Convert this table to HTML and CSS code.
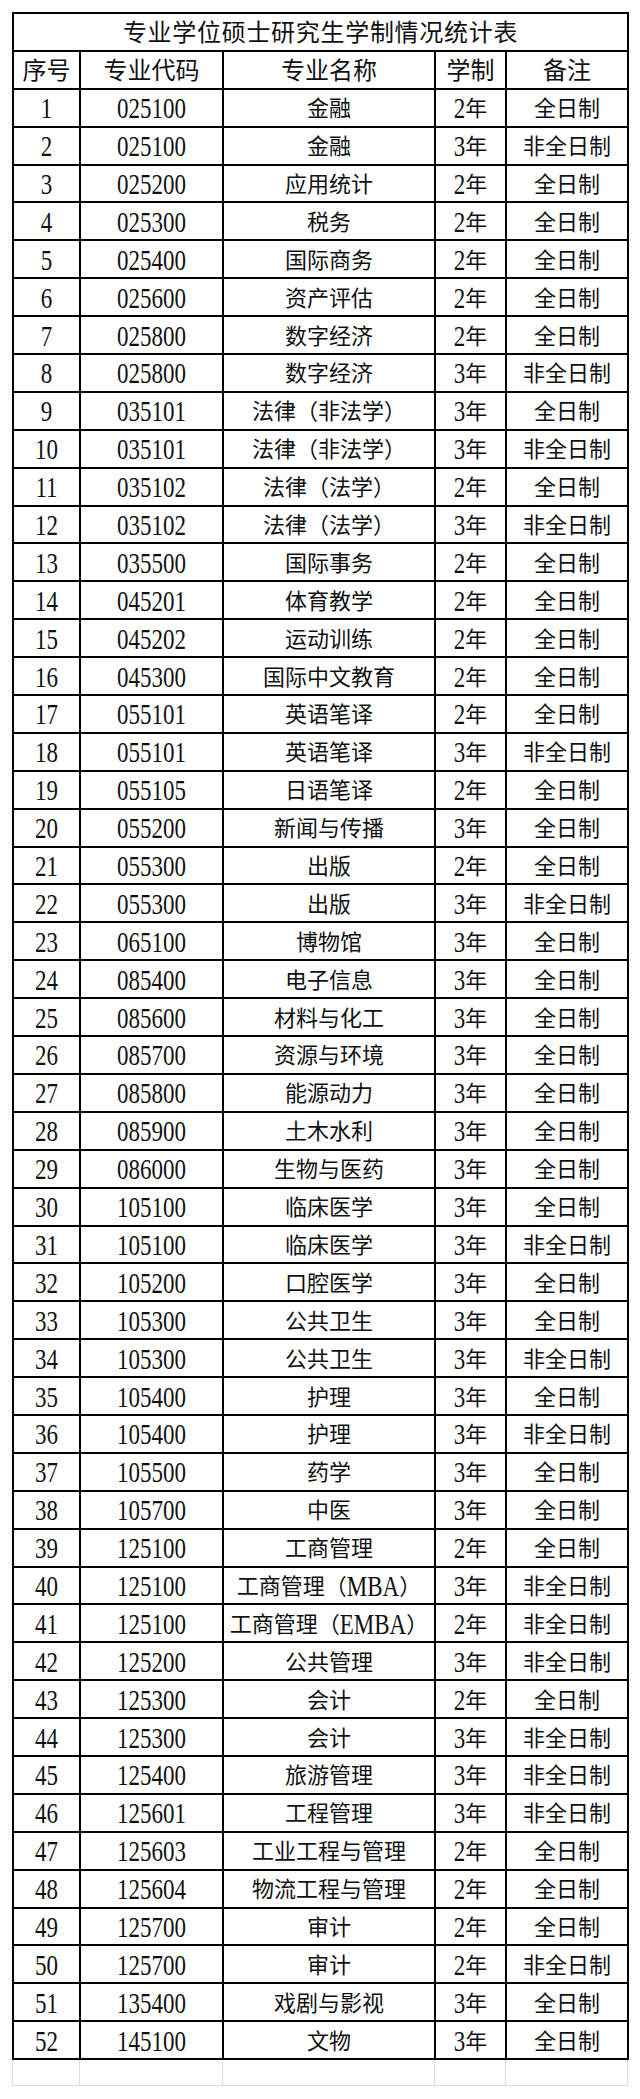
FILE: index.html
```html
<!DOCTYPE html>
<html lang="zh-CN">
<head>
<meta charset="utf-8">
<title>专业学位硕士研究生学制情况统计表</title>
<link rel="stylesheet" href="styles.css">
</head>
<body>
<div class="sheet">
<table class="stats">
<colgroup><col class="c1"><col class="c2"><col class="c3"><col class="c4"><col class="c5"></colgroup>
<thead>
<tr><th colspan="5" class="title">专业学位硕士研究生学制情况统计表</th></tr>
<tr class="head"><th>序号</th><th>专业代码</th><th>专业名称</th><th>学制</th><th>备注</th></tr>
</thead>
<tbody>
<tr><td><span class="n">1</span></td><td><span class="n">025100</span></td><td>金融</td><td><span class="n">2</span>年</td><td>全日制</td></tr>
<tr><td><span class="n">2</span></td><td><span class="n">025100</span></td><td>金融</td><td><span class="n">3</span>年</td><td>非全日制</td></tr>
<tr><td><span class="n">3</span></td><td><span class="n">025200</span></td><td>应用统计</td><td><span class="n">2</span>年</td><td>全日制</td></tr>
<tr><td><span class="n">4</span></td><td><span class="n">025300</span></td><td>税务</td><td><span class="n">2</span>年</td><td>全日制</td></tr>
<tr><td><span class="n">5</span></td><td><span class="n">025400</span></td><td>国际商务</td><td><span class="n">2</span>年</td><td>全日制</td></tr>
<tr><td><span class="n">6</span></td><td><span class="n">025600</span></td><td>资产评估</td><td><span class="n">2</span>年</td><td>全日制</td></tr>
<tr><td><span class="n">7</span></td><td><span class="n">025800</span></td><td>数字经济</td><td><span class="n">2</span>年</td><td>全日制</td></tr>
<tr><td><span class="n">8</span></td><td><span class="n">025800</span></td><td>数字经济</td><td><span class="n">3</span>年</td><td>非全日制</td></tr>
<tr><td><span class="n">9</span></td><td><span class="n">035101</span></td><td>法律（非法学）</td><td><span class="n">3</span>年</td><td>全日制</td></tr>
<tr><td><span class="n">10</span></td><td><span class="n">035101</span></td><td>法律（非法学）</td><td><span class="n">3</span>年</td><td>非全日制</td></tr>
<tr><td><span class="n">11</span></td><td><span class="n">035102</span></td><td>法律（法学）</td><td><span class="n">2</span>年</td><td>全日制</td></tr>
<tr><td><span class="n">12</span></td><td><span class="n">035102</span></td><td>法律（法学）</td><td><span class="n">3</span>年</td><td>非全日制</td></tr>
<tr><td><span class="n">13</span></td><td><span class="n">035500</span></td><td>国际事务</td><td><span class="n">2</span>年</td><td>全日制</td></tr>
<tr><td><span class="n">14</span></td><td><span class="n">045201</span></td><td>体育教学</td><td><span class="n">2</span>年</td><td>全日制</td></tr>
<tr><td><span class="n">15</span></td><td><span class="n">045202</span></td><td>运动训练</td><td><span class="n">2</span>年</td><td>全日制</td></tr>
<tr><td><span class="n">16</span></td><td><span class="n">045300</span></td><td>国际中文教育</td><td><span class="n">2</span>年</td><td>全日制</td></tr>
<tr><td><span class="n">17</span></td><td><span class="n">055101</span></td><td>英语笔译</td><td><span class="n">2</span>年</td><td>全日制</td></tr>
<tr><td><span class="n">18</span></td><td><span class="n">055101</span></td><td>英语笔译</td><td><span class="n">3</span>年</td><td>非全日制</td></tr>
<tr><td><span class="n">19</span></td><td><span class="n">055105</span></td><td>日语笔译</td><td><span class="n">2</span>年</td><td>全日制</td></tr>
<tr><td><span class="n">20</span></td><td><span class="n">055200</span></td><td>新闻与传播</td><td><span class="n">3</span>年</td><td>全日制</td></tr>
<tr><td><span class="n">21</span></td><td><span class="n">055300</span></td><td>出版</td><td><span class="n">2</span>年</td><td>全日制</td></tr>
<tr><td><span class="n">22</span></td><td><span class="n">055300</span></td><td>出版</td><td><span class="n">3</span>年</td><td>非全日制</td></tr>
<tr><td><span class="n">23</span></td><td><span class="n">065100</span></td><td>博物馆</td><td><span class="n">3</span>年</td><td>全日制</td></tr>
<tr><td><span class="n">24</span></td><td><span class="n">085400</span></td><td>电子信息</td><td><span class="n">3</span>年</td><td>全日制</td></tr>
<tr><td><span class="n">25</span></td><td><span class="n">085600</span></td><td>材料与化工</td><td><span class="n">3</span>年</td><td>全日制</td></tr>
<tr><td><span class="n">26</span></td><td><span class="n">085700</span></td><td>资源与环境</td><td><span class="n">3</span>年</td><td>全日制</td></tr>
<tr><td><span class="n">27</span></td><td><span class="n">085800</span></td><td>能源动力</td><td><span class="n">3</span>年</td><td>全日制</td></tr>
<tr><td><span class="n">28</span></td><td><span class="n">085900</span></td><td>土木水利</td><td><span class="n">3</span>年</td><td>全日制</td></tr>
<tr><td><span class="n">29</span></td><td><span class="n">086000</span></td><td>生物与医药</td><td><span class="n">3</span>年</td><td>全日制</td></tr>
<tr><td><span class="n">30</span></td><td><span class="n">105100</span></td><td>临床医学</td><td><span class="n">3</span>年</td><td>全日制</td></tr>
<tr><td><span class="n">31</span></td><td><span class="n">105100</span></td><td>临床医学</td><td><span class="n">3</span>年</td><td>非全日制</td></tr>
<tr><td><span class="n">32</span></td><td><span class="n">105200</span></td><td>口腔医学</td><td><span class="n">3</span>年</td><td>全日制</td></tr>
<tr><td><span class="n">33</span></td><td><span class="n">105300</span></td><td>公共卫生</td><td><span class="n">3</span>年</td><td>全日制</td></tr>
<tr><td><span class="n">34</span></td><td><span class="n">105300</span></td><td>公共卫生</td><td><span class="n">3</span>年</td><td>非全日制</td></tr>
<tr><td><span class="n">35</span></td><td><span class="n">105400</span></td><td>护理</td><td><span class="n">3</span>年</td><td>全日制</td></tr>
<tr><td><span class="n">36</span></td><td><span class="n">105400</span></td><td>护理</td><td><span class="n">3</span>年</td><td>非全日制</td></tr>
<tr><td><span class="n">37</span></td><td><span class="n">105500</span></td><td>药学</td><td><span class="n">3</span>年</td><td>全日制</td></tr>
<tr><td><span class="n">38</span></td><td><span class="n">105700</span></td><td>中医</td><td><span class="n">3</span>年</td><td>全日制</td></tr>
<tr><td><span class="n">39</span></td><td><span class="n">125100</span></td><td>工商管理</td><td><span class="n">2</span>年</td><td>全日制</td></tr>
<tr><td><span class="n">40</span></td><td><span class="n">125100</span></td><td>工商管理（<span class="n">MBA</span>）</td><td><span class="n">3</span>年</td><td>非全日制</td></tr>
<tr><td><span class="n">41</span></td><td><span class="n">125100</span></td><td>工商管理（<span class="n">EMBA</span>）</td><td><span class="n">2</span>年</td><td>非全日制</td></tr>
<tr><td><span class="n">42</span></td><td><span class="n">125200</span></td><td>公共管理</td><td><span class="n">3</span>年</td><td>非全日制</td></tr>
<tr><td><span class="n">43</span></td><td><span class="n">125300</span></td><td>会计</td><td><span class="n">2</span>年</td><td>全日制</td></tr>
<tr><td><span class="n">44</span></td><td><span class="n">125300</span></td><td>会计</td><td><span class="n">3</span>年</td><td>非全日制</td></tr>
<tr><td><span class="n">45</span></td><td><span class="n">125400</span></td><td>旅游管理</td><td><span class="n">3</span>年</td><td>非全日制</td></tr>
<tr><td><span class="n">46</span></td><td><span class="n">125601</span></td><td>工程管理</td><td><span class="n">3</span>年</td><td>非全日制</td></tr>
<tr><td><span class="n">47</span></td><td><span class="n">125603</span></td><td>工业工程与管理</td><td><span class="n">2</span>年</td><td>全日制</td></tr>
<tr><td><span class="n">48</span></td><td><span class="n">125604</span></td><td>物流工程与管理</td><td><span class="n">2</span>年</td><td>全日制</td></tr>
<tr><td><span class="n">49</span></td><td><span class="n">125700</span></td><td>审计</td><td><span class="n">2</span>年</td><td>全日制</td></tr>
<tr><td><span class="n">50</span></td><td><span class="n">125700</span></td><td>审计</td><td><span class="n">2</span>年</td><td>非全日制</td></tr>
<tr><td><span class="n">51</span></td><td><span class="n">135400</span></td><td>戏剧与影视</td><td><span class="n">3</span>年</td><td>全日制</td></tr>
<tr><td><span class="n">52</span></td><td><span class="n">145100</span></td><td>文物</td><td><span class="n">3</span>年</td><td>全日制</td></tr>
</tbody>
</table>
<div class="blank-row">
<div class="b1"></div><div class="b2"></div><div class="b3"></div><div class="b4"></div><div class="b5"></div>
</div>
</div>
</body>
</html>
```

FILE: styles.css
```css
html, body {
  margin: 0;
  padding: 0;
  background: #fff;
}
body {
  font-family: "Liberation Serif", "Noto Sans CJK SC", serif;
  color: #111;
}
.sheet {
  padding: 12px 0 0 12px;
}
.stats {
  border-collapse: separate;
  border-spacing: 2px;
  background: #000;
  table-layout: fixed;
  width: 617px;
}
.c1 { width: 65px; }
.c2 { width: 141px; }
.c3 { width: 210px; }
.c4 { width: 69px; }
.c5 { width: 120px; }
.stats tr {
  height: 35.9px;
}
.stats th,
.stats td {
  background: #fff;
  padding: 3px 0 0 0;
  text-align: center;
  vertical-align: middle;
  font-size: 22px;
  line-height: 26px;
  font-weight: 400;
  white-space: nowrap;
  overflow: hidden;
}
.stats .title {
  font-size: 24px;
  letter-spacing: 0.7px;
}
.stats .head th {
  font-size: 24px;
}
.n {
  display: inline-block;
  font-size: 23px;
  transform: scaleY(1.28);
  transform-origin: 50% 55%;
}
.blank-row {
  display: flex;
  width: 616px;
  height: 26px;
  border-left: 1px solid #dcdcdc;
}
.blank-row div {
  border-right: 1px solid #dcdcdc;
  border-bottom: 1px solid #dcdcdc;
  box-sizing: border-box;
}
.b1 { width: 67px; }
.b2 { width: 143px; }
.b3 { width: 212px; }
.b4 { width: 71px; }
.b5 { width: 122px; }
```
